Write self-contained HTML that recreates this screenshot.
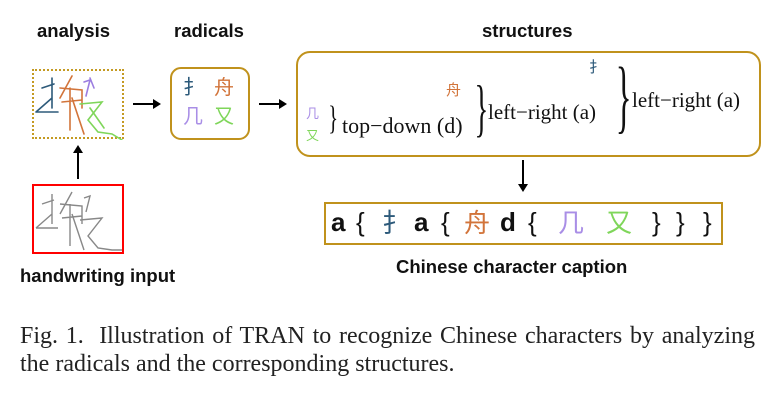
<!DOCTYPE html>
<html><head><meta charset="utf-8"><style>
body{margin:0;width:783px;height:416px;background:#fff;position:relative;overflow:hidden;font-family:"Liberation Sans","Noto Sans CJK SC",sans-serif}
.a{position:absolute;white-space:nowrap}
.h{font-weight:bold;font-size:18.5px;color:#111}
.s{font-family:"Liberation Serif","Noto Serif CJK SC",serif;font-size:21px;color:#111}
.cjk{font-family:"Noto Sans CJK SC",sans-serif}
.cap{font-family:"Liberation Serif",serif;font-size:24px;color:#222;width:735px;left:20px;text-align:justify;text-align-last:justify}
.c{position:absolute;top:203px;font-size:26px;line-height:38px;color:#111}
.b{font-weight:bold}
</style></head><body>
<div class="a h" style="left:37px;top:20px">analysis</div>
<div class="a h" style="left:174px;top:20px">radicals</div>
<div class="a h" style="left:482px;top:20px">structures</div>

<div class="a" style="left:32px;top:69px;width:88px;height:66px;border:2px dotted #c49a22"></div>
<svg class="a" style="left:32px;top:68px" width="95" height="72" fill="none" stroke-width="1.6" stroke-linecap="round">
<path d="M10 20 L22 16 M20 10 L20 40 M4 44 L20 30 M4 44 L26 44" stroke="#2d5a7a"/>
<path d="M40 8 L28 30 M28 20 L50 22 L50 40 M38 20 L38 62 M30 34 L50 32 M40 30 L52 66" stroke="#d2743a"/>
<path d="M52 14 L58 12 L54 28 M58 10 L62 20" stroke="#9c7ee0"/>
<path d="M48 36 L70 34 L56 52 L66 64 L80 66 L90 72 M58 40 L72 60" stroke="#7fd65a"/>
</svg>
<svg class="a" style="left:131px;top:97px" width="32" height="14"><path d="M2 7 H24" stroke="#000" stroke-width="2"/><path d="M22 2 L30 7 L22 12Z" fill="#000"/></svg>

<div class="a" style="left:170px;top:67px;width:76px;height:69px;border:2px solid #c0921c;border-radius:11px"></div>
<div class="a cjk" style="left:183px;top:71px;font-size:20px;color:#2d5a7a">扌</div>
<div class="a cjk" style="left:214px;top:71px;font-size:20px;color:#d2743a">舟</div>
<div class="a cjk" style="left:183px;top:100px;font-size:20px;color:#a98ee6">几</div>
<div class="a cjk" style="left:214px;top:100px;font-size:20px;color:#7fd65a">又</div>
<svg class="a" style="left:257px;top:97px" width="32" height="14"><path d="M2 7 H24" stroke="#000" stroke-width="2"/><path d="M22 2 L30 7 L22 12Z" fill="#000"/></svg>

<div class="a" style="left:296px;top:51px;width:461px;height:102px;border:2px solid #c0921c;border-radius:14px"></div>
<div class="a cjk" style="left:306px;top:103px;font-size:13px;color:#a98ee6">几</div>
<div class="a cjk" style="left:306px;top:125px;font-size:13px;color:#7fd65a">又</div>
<div class="a s" style="left:325px;top:100px;font-size:34px;transform:scaleX(.6)">}</div>
<div class="a s" style="left:342px;top:113px;font-size:22px">top−down (d)</div>
<div class="a cjk" style="left:446px;top:79px;font-size:15px;color:#d2743a">舟</div>
<div class="a s" style="left:466px;top:72px;font-size:64px;transform:scaleX(.45);line-height:72px">}</div>
<div class="a s" style="left:488px;top:100px">left−right (a)</div>
<div class="a cjk" style="left:589px;top:56px;font-size:15px;color:#2d5a7a">扌</div>
<div class="a s" style="left:604px;top:50px;font-size:82px;transform:scaleX(.4);line-height:92px">}</div>
<div class="a s" style="left:632px;top:88px">left−right (a)</div>

<svg class="a" style="left:517px;top:160px" width="12" height="34"><path d="M6 0 V26" stroke="#000" stroke-width="2"/><path d="M1 24 L6 32 L11 24Z" fill="#000"/></svg>

<div class="a" style="left:324px;top:202px;width:395px;height:39px;border:2px solid #c0921c"></div>
<span class="c b" style="left:331px">a</span>
<span class="c" style="left:356px">{</span>
<span class="c cjk" style="left:382px;color:#2d5a7a">扌</span>
<span class="c b" style="left:414px">a</span>
<span class="c" style="left:441px">{</span>
<span class="c cjk" style="left:464px;color:#d2743a">舟</span>
<span class="c b" style="left:500px">d</span>
<span class="c" style="left:528px">{</span>
<span class="c cjk" style="left:558px;color:#a98ee6">几</span>
<span class="c cjk" style="left:606px;color:#7fd65a">又</span>
<span class="c" style="left:652px">}</span>
<span class="c" style="left:676px">}</span>
<span class="c" style="left:703px">}</span>
<div class="a h" style="left:396px;top:256px">Chinese character caption</div>

<svg class="a" style="left:72px;top:143px" width="12" height="38"><path d="M6 36 V8" stroke="#000" stroke-width="2"/><path d="M1 10 L6 2 L11 10Z" fill="#000"/></svg>
<div class="a" style="left:32px;top:184px;width:88px;height:66px;border:2px solid #f00"></div>
<svg class="a" style="left:32px;top:184px" width="95" height="72" fill="none" stroke="#888" stroke-width="1.4">
<path d="M10 20 L22 16 M20 10 L20 40 M4 44 L20 30 M4 44 L26 44 M40 8 L28 30 M28 20 L50 22 L50 40 M38 20 L38 62 M30 34 L50 32 M40 30 L52 66 M52 14 L58 12 L54 28 M48 36 L70 34 L56 52 L66 64 L80 66 L90 66"/>
</svg>
<div class="a h" style="left:20px;top:265px">handwriting input</div>

<div class="a cap" style="top:323px">Fig. 1.&nbsp; Illustration of TRAN to recognize Chinese characters by analyzing</div>
<div class="a cap" style="top:351px;text-align-last:left">the radicals and the corresponding structures.</div>
</body></html>
